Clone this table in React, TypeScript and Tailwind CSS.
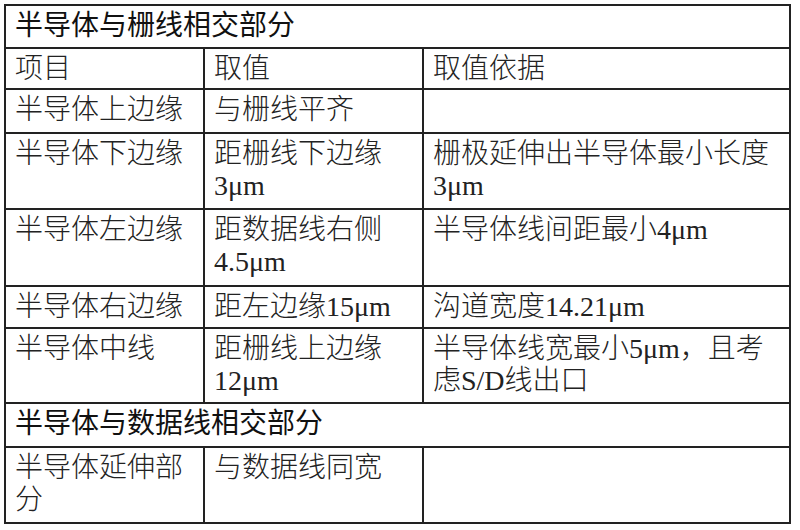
import React from "react";

const font = { fontFamily: '"Liberation Serif", "Noto Sans CJK SC", serif' };

function Cell({ children, span = false }: { children?: React.ReactNode; span?: boolean }) {
  return (
    <div
      className={
        "bg-white pl-[9px] pt-[4px] text-[28px] leading-[32px] whitespace-nowrap overflow-hidden " +
        (span ? "col-span-3 font-normal text-[#111111]" : "font-light text-[#222222]")
      }
    >
      {children}
    </div>
  );
}

export default function App() {
  return (
    <div className="w-[800px] h-[530px] bg-white pl-[4px] pt-[4px]" style={font}>
      <div className="grid w-[787px] grid-cols-[197px_217px_365px] grid-rows-[41px_39px_42px_74px_75px_40px_73px_42px_74px] gap-[2px] bg-[#222222] p-[2px]">
        <Cell span>半导体与栅线相交部分</Cell>
        <Cell>项目</Cell>
        <Cell>取值</Cell>
        <Cell>取值依据</Cell>

        <Cell>半导体上边缘</Cell>
        <Cell>与栅线平齐</Cell>
        <Cell />

        <Cell>半导体下边缘</Cell>
        <Cell>
          距栅线下边缘
          <br />
          3μm
        </Cell>
        <Cell>
          栅极延伸出半导体最小长度
          <br />
          3μm
        </Cell>

        <Cell>半导体左边缘</Cell>
        <Cell>
          距数据线右侧
          <br />
          4.5μm
        </Cell>
        <Cell>半导体线间距最小4μm</Cell>

        <Cell>半导体右边缘</Cell>
        <Cell>距左边缘15μm</Cell>
        <Cell>沟道宽度14.21μm</Cell>

        <Cell>半导体中线</Cell>
        <Cell>
          距栅线上边缘
          <br />
          12μm
        </Cell>
        <Cell>
          半导体线宽最小5μm，且考
          <br />
          虑S/D线出口
        </Cell>

        <Cell span>半导体与数据线相交部分</Cell>

        <Cell>
          半导体延伸部
          <br />
          分
        </Cell>
        <Cell>与数据线同宽</Cell>
        <Cell />
      </div>
    </div>
  );
}
